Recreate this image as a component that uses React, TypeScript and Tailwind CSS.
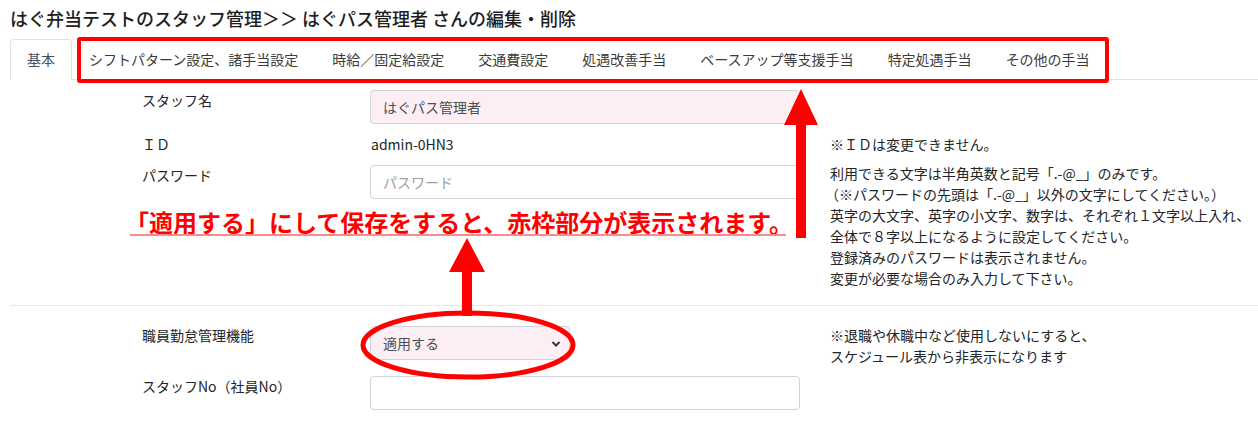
import React from 'react'

const tabs = [
  '基本',
  'シフトパターン設定、諸手当設定',
  '時給／固定給設定',
  '交通費設定',
  '処遇改善手当',
  'ベースアップ等支援手当',
  '特定処遇手当',
  'その他の手当',
]

const passwordNotes = [
  '利用できる文字は半角英数と記号「.-@_」のみです。',
  '（※パスワードの先頭は「.-@_」以外の文字にしてください。）',
  '英字の大文字、英字の小文字、数字は、それぞれ１文字以上入れ、',
  '全体で８字以上になるように設定してください。',
  '登録済みのパスワードは表示されません。',
  '変更が必要な場合のみ入力して下さい。',
]

function Row({ label, children, note, noteClass = '', className = '' }: {
  label: string; children: React.ReactNode; note?: React.ReactNode; noteClass?: string; className?: string
}) {
  return (
    <div className={`flex items-start pl-[142px] ${className}`}>
      <div className="w-[228px] shrink-0 leading-[21px]">{label}</div>
      <div className="w-[430px] shrink-0">{children}</div>
      {note && <div className={`ml-[30px] leading-[21px] ${noteClass}`}>{note}</div>}
    </div>
  )
}

export default function App() {
  return (
    <div className="relative w-[1258px] h-[422px] overflow-hidden bg-white text-[14px] text-[#212529] font-['Noto_Sans_CJK_JP','Noto_Sans',sans-serif]">
      <h1 className="pl-[10px] pt-[5px] text-[18px] leading-[26px] font-medium text-[#1e1e1e]">
        はぐ弁当テストのスタッフ管理＞＞ はぐパス管理者 さんの編集・削除
      </h1>

      {/* tabs */}
      <div className="mt-[8px] ml-[10px] flex border-b border-[#dee2e6]">
        {tabs.map((t, i) => (
          <div
            key={t}
            className={
              i === 0
                ? '-mb-px rounded-t border border-[#dee2e6] border-b-white bg-white px-4 py-[9px] leading-[21px] text-[#495057]'
                : '-mb-px border border-transparent px-4 py-[9px] leading-[21px] text-[#3b3b3b]'
            }
          >
            {t}
          </div>
        ))}
      </div>

      {/* form */}
      <Row label="スタッフ名" className="mt-[10px]">
        <div className="h-[34px] rounded border border-[#ced4da] bg-[#fdeef4] px-3 leading-[32px] text-[#495057]">
          はぐパス管理者
        </div>
      </Row>
      <Row label="ＩＤ" className="mt-[10px]" note="※ＩＤは変更できません。">
        <div className="pl-px leading-[21px]">admin-0HN3</div>
      </Row>
      <Row
        label="パスワード"
        className="mt-[10px]"
        noteClass="-mt-[2px]"
        note={passwordNotes.map((n) => (
          <div key={n} className={n.startsWith('（') ? '-ml-[5px]' : ''}>{n}</div>
        ))}
      >
        <div className="h-[34px] rounded border border-[#ced4da] bg-white px-3 leading-[32px] text-[#9aa0a6]">
          パスワード
        </div>
      </Row>

      <div className="ml-[10px] mt-[16px] border-t border-[#e6e8ea]" />

      <Row
        label="職員勤怠管理機能"
        className="mt-[19px]"
        noteClass="leading-[20px]"
        note={
          <>
            <div>※退職や休職中など使用しないにすると、</div>
            <div>スケジュール表から非表示になります</div>
          </>
        }
      >
        <div className="mt-[1px] flex h-[34px] w-[200px] items-center justify-between rounded border border-[#ced4da] bg-[#fdeef4] pl-3 pr-[8px] text-[#495057]">
          <span>適用する</span>
          <svg width="10" height="8" viewBox="0 0 10 8" className="mt-[1px]">
            <path d="M1.5 2 L5 5.5 L8.5 2" fill="none" stroke="#343a40" strokeWidth="2" />
          </svg>
        </div>
      </Row>
      <Row label="スタッフNo（社員No）" className="mt-[9px]">
        <div className="h-[34px] rounded border border-[#ced4da] bg-white" />
      </Row>

      {/* annotations */}
      <div className="pointer-events-none absolute left-[77px] top-[37px] h-[46px] w-[1032px] rounded-[3px] border-[4px] border-[#ff0000]" />

      <div className="absolute left-[125px] top-[207px] whitespace-nowrap text-[24px] font-bold leading-[30px] text-[#ff0000]">
        「適用する」にして保存をすると、赤枠部分が表示されます。
      </div>
      <div className="absolute left-[130px] top-[234px] h-[2px] w-[656px] bg-[#ff8a8a]" />

      <svg className="absolute left-0 top-0" width="1258" height="422" viewBox="0 0 1258 422">
        <polygon points="801,89 818,125 806,125 806,238 796,238 796,125 784,125" fill="#ff0000" />
        <polygon points="467,238 485,272 472,272 472,316 462,316 462,272 449,272" fill="#ff0000" />
        <ellipse cx="468" cy="345" rx="105" ry="32" fill="none" stroke="#ff0000" strokeWidth="5" />
      </svg>
    </div>
  )
}
